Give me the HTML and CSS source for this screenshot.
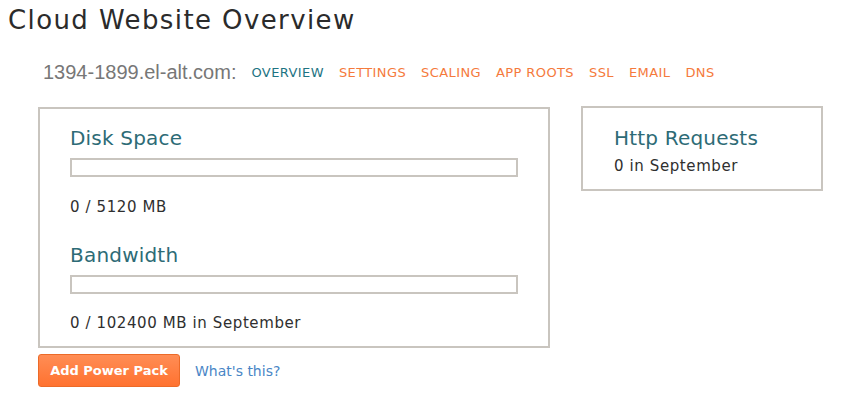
FILE: index.html
```html
<!DOCTYPE html>
<html>
<head>
<meta charset="utf-8">
<link rel="stylesheet" href="styles.css">
</head>
<body>
<h1 class="title">Cloud Website Overview</h1>
<div class="subnav">
  <span class="domain">1394-1899.el-alt.com:</span>
  <a class="tab active">OVERVIEW</a>
  <a class="tab">SETTINGS</a>
  <a class="tab">SCALING</a>
  <a class="tab">APP ROOTS</a>
  <a class="tab">SSL</a>
  <a class="tab">EMAIL</a>
  <a class="tab">DNS</a>
</div>
<div class="main">
  <div class="left">
    <div class="usage">
      <h2 class="heading">Disk Space</h2>
      <div class="bar"></div>
      <p class="stat">0 / 5120 MB</p>
      <h2 class="heading second">Bandwidth</h2>
      <div class="bar"></div>
      <p class="stat last">0 / 102400 MB in September</p>
    </div>
    <div class="actions">
      <button class="btn">Add Power Pack</button>
      <a class="help">What's this?</a>
    </div>
  </div>
  <div class="requests">
    <h2 class="heading">Http Requests</h2>
    <p class="stat small">0 in September</p>
  </div>
</div>
</body>
</html>
```
FILE: styles.css
```css
body {
  margin: 0;
  padding: 0 8px;
  font-family: "DejaVu Sans", sans-serif;
  color: #333;
  background: #fff;
}
.title {
  margin: 4px 0 0;
  font-size: 26px;
  line-height: 32px;
  font-weight: normal;
  letter-spacing: 1.4px;
  color: #2b2b2b;
}
.subnav {
  margin: 24px 0 0 35px;
  height: 24px;
  display: flex;
  align-items: center;
  gap: 15px;
}
.domain {
  font-family: "Liberation Sans", Arial, sans-serif;
  font-size: 20px;
  color: #777;
}
.tab {
  font-size: 13px;
  color: #f57a3c;
  letter-spacing: 0.4px;
}
.tab.active {
  color: #1d7483;
}
.main {
  display: flex;
  align-items: flex-start;
  gap: 31px;
  margin: 23px 0 0 30px;
}
.usage {
  width: 448px;
  border: 2px solid #c9c5bf;
  padding: 17px 30px 13px;
}
.heading {
  margin: 0;
  font-size: 20px;
  line-height: 24px;
  font-weight: normal;
  letter-spacing: 0.2px;
  color: #2d6b76;
}
.heading.second {
  margin-top: 26px;
}
.bar {
  margin-top: 8px;
  height: 15px;
  border: 2px solid #c9c5bf;
}
.stat {
  margin: 20px 0 0;
  font-size: 15px;
  line-height: 20px;
  letter-spacing: 0.6px;
  color: #2f2f2f;
}
.stat.last {
  margin-top: 19px;
}
.actions {
  margin-top: 6px;
  display: flex;
  align-items: center;
  gap: 15px;
}
.btn {
  width: 142px;
  height: 33px;
  border: 1px solid #ec6a28;
  border-radius: 3px;
  background: linear-gradient(#ff8d55, #ff7230);
  color: #fff;
  font-family: "DejaVu Sans", sans-serif;
  font-weight: bold;
  font-size: 13px;
  padding: 0;
}
.help {
  font-size: 14px;
  color: #4a86c6;
}
.requests {
  width: 177px;
  border: 2px solid #c9c5bf;
  padding: 18px 30px 13px 31px;
  margin-top: -1px;
}
.stat.small {
  margin-top: 6px;
}
```
